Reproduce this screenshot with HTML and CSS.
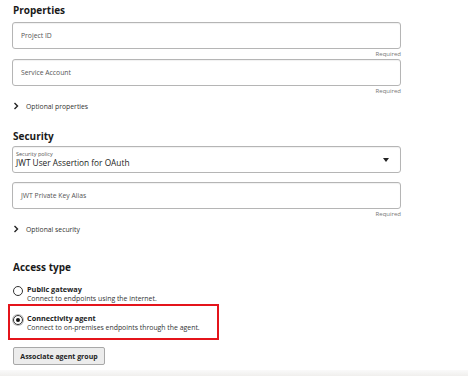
FILE: index.html
```html
<!DOCTYPE html>
<html lang="en">
<head>
    <meta charset="UTF-8">
    <title>Connection</title>
    <link rel="stylesheet" href="styles.css">
</head>
<body>
    <div class="page">
        <h2 class="section-title">Properties</h2>
        <div class="field"><span class="placeholder">Project ID</span></div>
        <div class="req">Required</div>
        <div class="field"><span class="placeholder">Service Account</span></div>
        <div class="req">Required</div>
        <div class="toggle">
            <svg class="chev" width="6" height="8" viewBox="0 0 6 8"><polyline points="1.5,1 4.5,4 1.5,7" fill="none" stroke="#222" stroke-width="1.4"/></svg>
            Optional properties
        </div>

        <h2 class="section-title security">Security</h2>
        <div class="field select">
            <div class="select-text">
                <span class="select-label">Security policy</span>
                <span class="select-value">JWT User Assertion for OAuth</span>
            </div>
            <svg class="arrow" width="6" height="4" viewBox="0 0 6 4"><polygon points="0,0 6,0 3,4" fill="#222"/></svg>
        </div>
        <div class="field jwt"><span class="placeholder">JWT Private Key Alias</span></div>
        <div class="req">Required</div>
        <div class="toggle">
            <svg class="chev" width="6" height="8" viewBox="0 0 6 8"><polyline points="1.5,1 4.5,4 1.5,7" fill="none" stroke="#222" stroke-width="1.4"/></svg>
            Optional security
        </div>

        <h2 class="section-title access">Access type</h2>
        <div class="option">
            <span class="radio"></span>
            <div class="option-text">
                <div class="option-name">Public gateway</div>
                <div class="option-desc">Connect to endpoints using the internet.</div>
            </div>
        </div>
        <div class="option selected">
            <span class="radio checked"></span>
            <div class="option-text">
                <div class="option-name">Connectivity agent</div>
                <div class="option-desc">Connect to on-premises endpoints through the agent.</div>
            </div>
        </div>
        <button class="btn">Associate agent group</button>
    </div>
    <div class="bottom-strip"></div>
</body>
</html>
```

FILE: styles.css
```css
body {
    margin: 0;
    background: #ffffff;
    font-family: 'Open Sans', sans-serif;
    color: #222;
    width: 468px;
    height: 376px;
    overflow: hidden;
    position: relative;
}

.page {
    padding: 3px 0 0 12px;
    width: 389px;
}

.section-title {
    font-size: 10px;
    font-weight: 700;
    line-height: 15px;
    margin: 0 0 4px 1px;
    color: #1a1a1a;
}

.section-title.security {
    margin-top: 18px;
    margin-bottom: 2px;
}

.section-title.access {
    margin-top: 26px;
    margin-bottom: 10px;
}

.field {
    height: 25px;
    border: 1px solid #b5b5b5;
    border-radius: 3px;
    box-shadow: inset 0 1px 1px rgba(0, 0, 0, 0.06);
    display: flex;
    align-items: center;
    padding: 0 8px;
}

.placeholder {
    font-size: 6.8px;
    color: #555;
}

.req {
    font-size: 6px;
    color: #777;
    text-align: right;
    height: 10px;
    line-height: 10px;
}

.toggle {
    font-size: 6.8px;
    color: #333;
    display: flex;
    align-items: center;
    gap: 7px;
    height: 10px;
    margin: 5px 0 0 1px;
}

.select {
    justify-content: space-between;
    padding: 0 11px 0 3px;
}

.select-text {
    display: flex;
    flex-direction: column;
    line-height: 9px;
    margin-top: -2px;
}

.select-label {
    font-size: 5.5px;
    color: #555;
    line-height: 7px;
}

.select-value {
    font-size: 8.3px;
    color: #222;
}

.field.jwt {
    margin-top: 9px;
}

.option {
    display: flex;
    align-items: flex-start;
    gap: 4px;
    padding-left: 1px;
    width: 200px;
}

.option.selected {
    margin: 1px 0 0 -4px;
    padding: 8px 0 6px 3px;
    width: 204px;
    border: 2px solid #e4141b;
}

.radio {
    width: 8px;
    height: 8px;
    border: 1px solid #333;
    border-radius: 50%;
    margin-top: 1px;
    position: relative;
    flex-shrink: 0;
}

.radio.checked {
    box-shadow: 0 0 0 1px #bbb;
}

.radio.checked::after {
    content: '';
    position: absolute;
    left: 2px;
    top: 2px;
    width: 4px;
    height: 4px;
    border-radius: 50%;
    background: #111;
}

.option-name {
    font-size: 7.3px;
    font-weight: 700;
    line-height: 9px;
}

.option-desc {
    font-size: 6.9px;
    line-height: 9px;
    color: #333;
}

.btn {
    margin: 7px 0 0 1px;
    width: 92px;
    height: 18px;
    font-family: 'Open Sans', sans-serif;
    font-size: 7px;
    font-weight: 700;
    color: #222;
    background: #ececec;
    border: 1px solid #a8a8a8;
    border-radius: 2px;
    padding: 0;
}

.bottom-strip {
    position: absolute;
    left: 0;
    right: 0;
    bottom: 0;
    height: 6px;
    background: linear-gradient(#fafafa, #f0efed);
}
```
